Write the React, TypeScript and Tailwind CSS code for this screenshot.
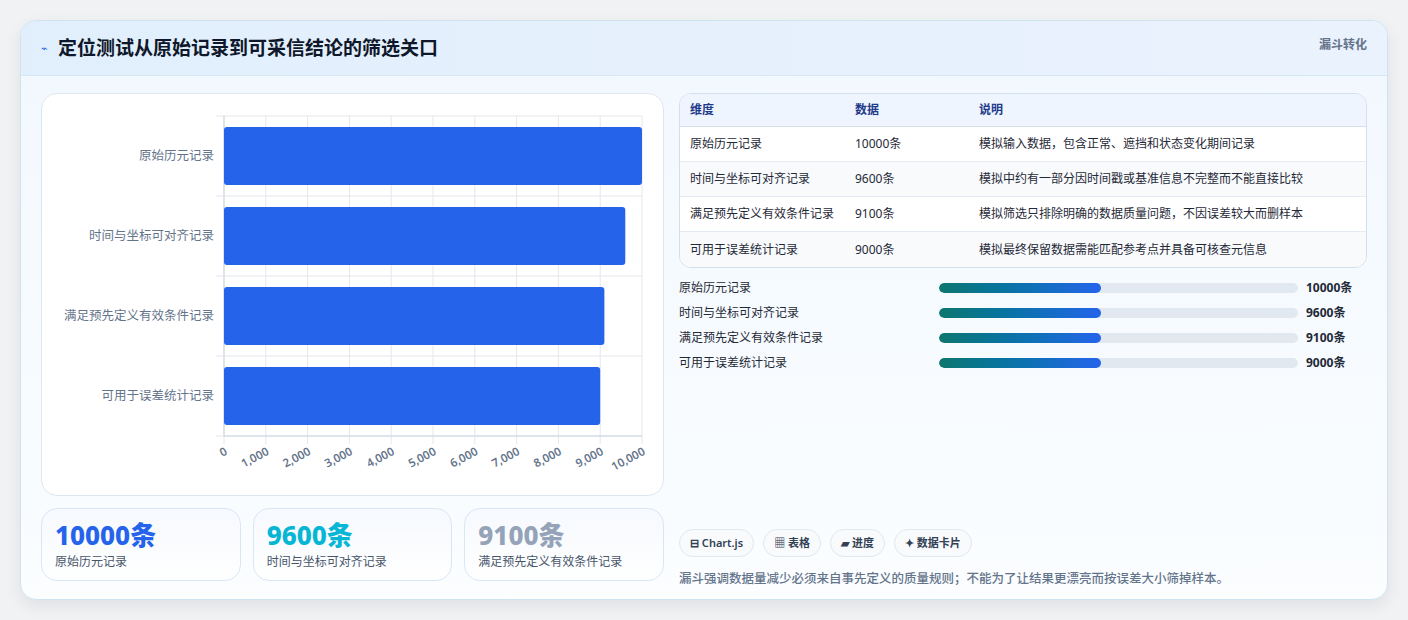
const rows = [
  { name: "原始历元记录", value: 10000, note: "模拟输入数据，包含正常、遮挡和状态变化期间记录" },
  { name: "时间与坐标可对齐记录", value: 9600, note: "模拟中约有一部分因时间戳或基准信息不完整而不能直接比较" },
  { name: "满足预先定义有效条件记录", value: 9100, note: "模拟筛选只排除明确的数据质量问题，不因误差较大而删样本" },
  { name: "可用于误差统计记录", value: 9000, note: "模拟最终保留数据需能匹配参考点并具备可核查元信息" },
];

const font = { fontFamily: '"Noto Sans", "Noto Sans CJK SC", sans-serif' };

function Chart() {
  const x0 = 182;
  const x1 = 600;
  const top = 22;
  const bottom = 342;
  const w = x1 - x0;
  const ticks = Array.from({ length: 11 }, (_, i) => i * 1000);
  return (
    <svg width="621" height="401" viewBox="0 0 621 401" style={font}>
      {ticks.map((t) => {
        const x = x0 + (t / 10000) * w;
        return <line key={t} x1={x} x2={x} y1={top} y2={bottom + 8} stroke="#e5e7eb" />;
      })}
      {[0, 1, 2, 3, 4].map((i) => (
        <line key={i} x1={x0 - 8} x2={x1} y1={top + i * 80} y2={top + i * 80} stroke="#e5e7eb" />
      ))}
      <line x1={x0} x2={x0} y1={top} y2={bottom} stroke="#cbd5e1" />
      <line x1={x0} x2={x1} y1={bottom} y2={bottom} stroke="#cbd5e1" />
      {rows.map((r, i) => (
        <g key={r.name}>
          <rect x={x0} y={top + i * 80 + 11} width={(r.value / 10000) * w} height={58} rx="3" fill="#2563eb" />
          <text x={172} y={top + i * 80 + 44} textAnchor="end" fontSize="12.5" fill="#64748b">
            {r.name}
          </text>
        </g>
      ))}
      {ticks.map((t) => {
        const x = x0 + (t / 10000) * w;
        return (
          <text
            key={t}
            transform={`translate(${x + 4} ${bottom + 18}) rotate(-28)`}
            textAnchor="end"
            fontSize="11.5"
            fontWeight="600"
            fill="#64748b"
          >
            {t.toLocaleString("en-US")}
          </text>
        );
      })}
    </svg>
  );
}

export default function App() {
  return (
    <div className="w-[1408px] h-[620px] bg-[#f1f2f4] pt-5 pl-5" style={font}>
      <div className="w-[1368px] h-[580px] rounded-2xl border border-[#cfe3f1] bg-gradient-to-b from-[#f1f8fe] to-[#fbfdff] overflow-hidden shadow-[0_6px_16px_rgba(15,23,42,0.08)] flex flex-col">
        <div className="h-[55px] shrink-0 flex items-center justify-between px-5 bg-gradient-to-r from-[#e1effc] to-[#eaf2fd] border-b border-[#d6e6f5]">
          <div className="flex items-center gap-2.5">
            <span className="text-[#2563eb] text-[11px]">⌁</span>
            <span className="text-[19px] font-bold text-[#0f172a]">定位测试从原始记录到可采信结论的筛选关口</span>
          </div>
          <span className="text-[12px] font-semibold text-[#64748b] self-start mt-[15px]">漏斗转化</span>
        </div>
        <div className="flex gap-[15px] px-5 pt-[17px]">
          <div className="w-[623px] flex flex-col gap-[12px]">
            <div className="h-[403px] rounded-2xl border border-[#dde7f1] bg-white">
              <Chart />
            </div>
            <div className="grid grid-cols-3 gap-[12px]">
              {[
                { v: "10000条", l: "原始历元记录", c: "text-[#2563eb]" },
                { v: "9600条", l: "时间与坐标可对齐记录", c: "text-[#06b6d4]" },
                { v: "9100条", l: "满足预先定义有效条件记录", c: "text-[#94a3b8]" },
              ].map((s) => (
                <div key={s.l} className="h-[73px] rounded-2xl border border-[#d9e6f4] bg-gradient-to-b from-[#f6f9fe] to-white px-[13px] pt-[10px]">
                  <div className={`text-[26px] leading-[32px] font-extrabold ${s.c}`}>{s.v}</div>
                  <div className="text-[12px] text-[#475569] mt-[2px]">{s.l}</div>
                </div>
              ))}
            </div>
          </div>
          <div className="flex-1 flex flex-col">
            <div className="rounded-xl border border-[#d3dfeb] overflow-hidden bg-white text-[12px]">
              <div className="grid grid-cols-[165px_124px_1fr] h-[33px] items-center px-[10px] bg-[#eef5fe] border-b border-[#d3dfeb] font-semibold text-[#1e3a8a]">
                <span>维度</span>
                <span>数据</span>
                <span>说明</span>
              </div>
              {rows.map((r, i) => (
                <div
                  key={r.name}
                  className={`grid grid-cols-[165px_124px_1fr] h-[35px] items-center px-[10px] text-[#1f2937] ${i % 2 ? "bg-[#f8fafc]" : "bg-white"} ${i < 3 ? "border-b border-[#e5ebf2]" : ""}`}
                >
                  <span>{r.name}</span>
                  <span>{r.value}条</span>
                  <span>{r.note}</span>
                </div>
              ))}
            </div>
            <div className="flex flex-col gap-[7px] mt-[11px] text-[12px]">
              {rows.map((r) => (
                <div key={r.name} className="flex items-center h-[18px]">
                  <span className="w-[260px] text-[#1f2937]">{r.name}</span>
                  <div className="w-[359px] h-[10px] rounded-full bg-[#e2e8f0] overflow-hidden">
                    <div className="h-full w-[45%] rounded-full bg-gradient-to-r from-[#0f766e] to-[#2563eb]" />
                  </div>
                  <span className="ml-[8px] font-bold text-[#1f2937]">{r.value}条</span>
                </div>
              ))}
            </div>
            <div className="flex gap-[9px] mt-[157px] text-[11px] font-semibold text-[#334155]">
              {["⊟ Chart.js", "▦ 表格", "▰ 进度", "✦ 数据卡片"].map((c) => (
                <span key={c} className="h-[28px] px-[10px] rounded-full border border-[#e2e8f0] bg-[#f8fafc] flex items-center">
                  {c}
                </span>
              ))}
            </div>
            <div className="mt-[13px] text-[12.5px] font-medium text-[#64748b]">
              漏斗强调数据量减少必须来自事先定义的质量规则；不能为了让结果更漂亮而按误差大小筛掉样本。
            </div>
          </div>
        </div>
      </div>
    </div>
  );
}
